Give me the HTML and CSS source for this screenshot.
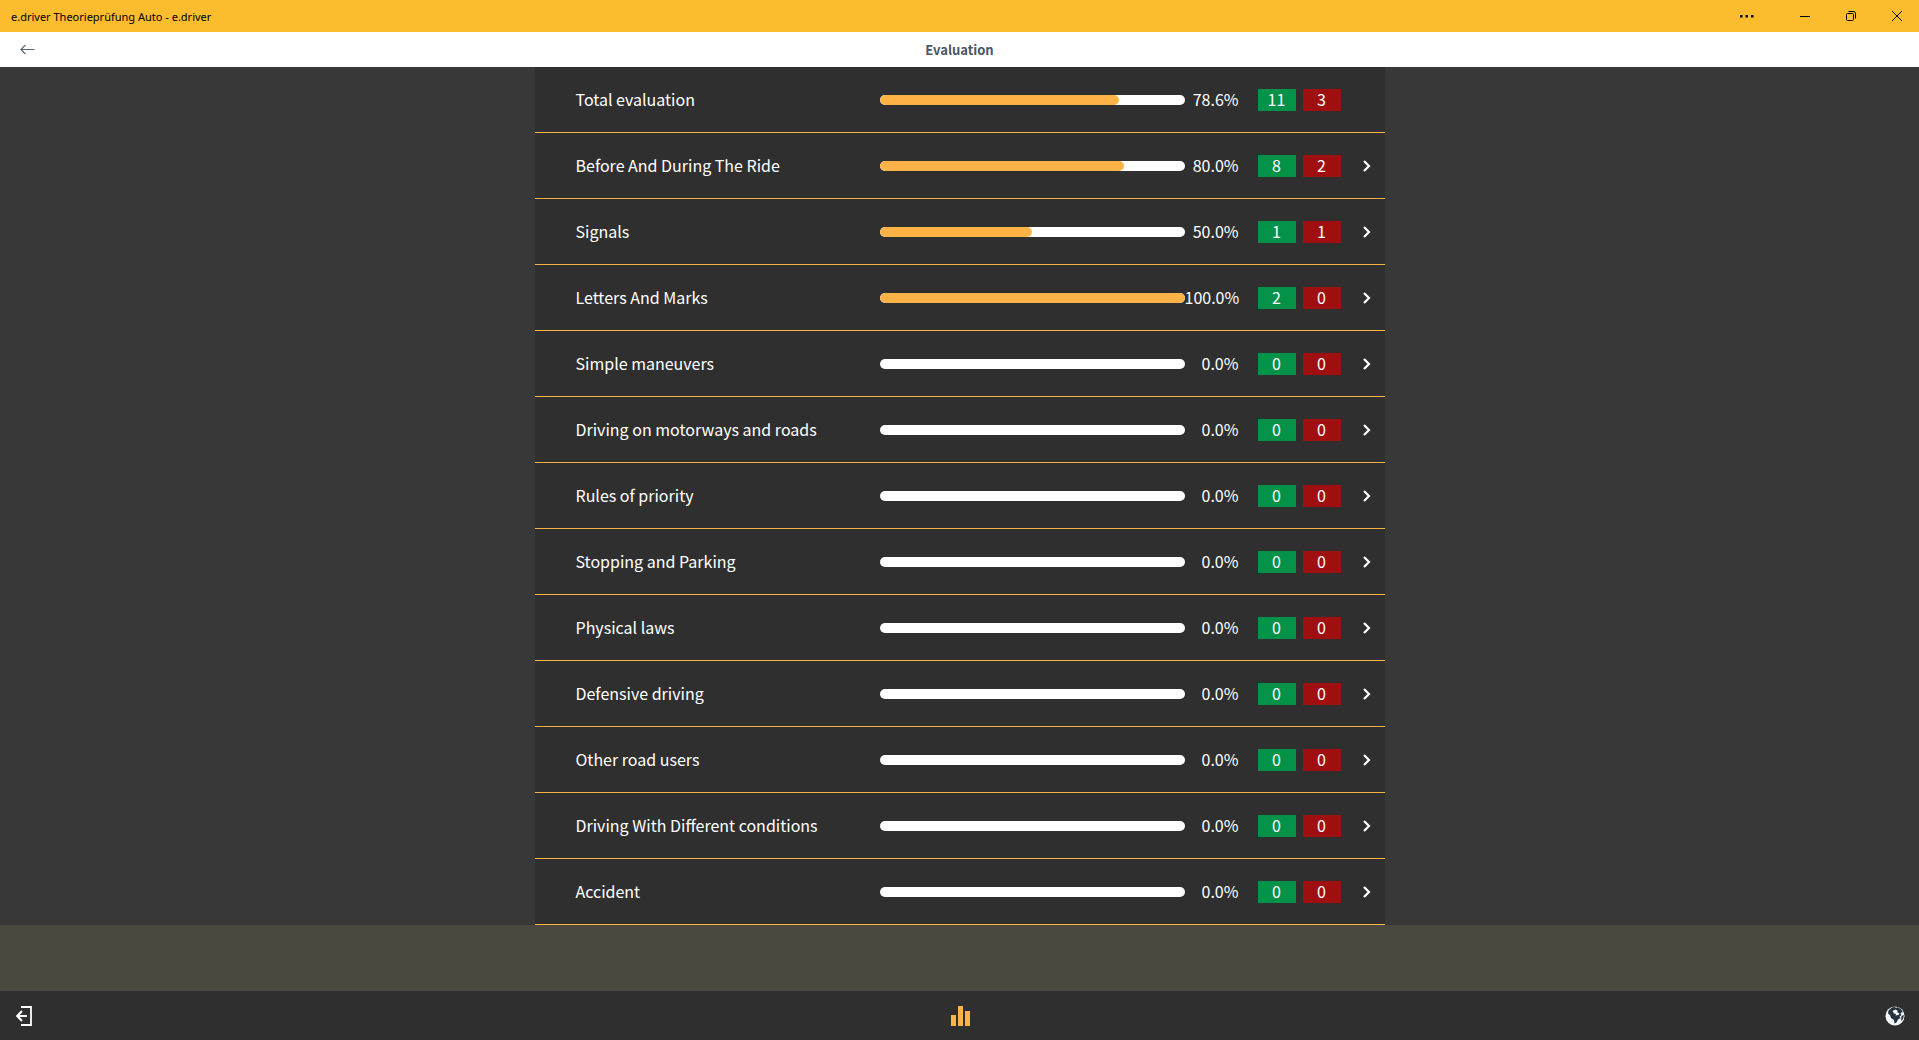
FILE: index.html
```
<!DOCTYPE html>
<html lang="en">
<head>
  <meta charset="UTF-8">
  <meta name="viewport" content="width=device-width, initial-scale=1.0">
  <title>e.driver Theorieprüfung Auto - e.driver</title>
  <link rel="stylesheet" href="styles.css">
</head>
<body>
  <div class="titlebar">
    <span class="app-name">e.driver Theorieprüfung Auto - e.driver</span>
    <div class="window-controls">
      <button class="more" aria-label="More">
        <svg width="14" height="10" viewBox="0 0 14 10"><path d="M0 4h2.500v2.500H0zM5.500 4H8v2.500H5.500zM11 4h2.500v2.500H11z"/></svg>
      </button>
      <button aria-label="Minimize">
        <svg width="10" height="10" viewBox="0 0 10 10"><path d="M0 5h10v1H0z"/></svg>
      </button>
      <button aria-label="Restore">
        <svg width="10" height="10" viewBox="0 0 10 10" fill="none" stroke="#000"><rect x=".5" y="2.500" width="7" height="7" rx="1"/><path d="M2.500 .5h5a2 2 0 0 1 2 2v5"/></svg>
      </button>
      <button aria-label="Close">
        <svg width="10" height="10" viewBox="0 0 10 10" fill="none" stroke="#000"><path d="M0 0l10 10M10 0L0 10"/></svg>
      </button>
    </div>
  </div>

  <header>
    <button class="back" aria-label="Back">
      <svg width="15" height="11" viewBox="0 0 15 11" fill="none" stroke="#5a6478" stroke-width="1.200"><path d="M14.500 5.500H1M5.500 .8L1 5.500l4.500 4.700"/></svg>
    </button>
    <h1>Evaluation</h1>
  </header>

  <main>
    <div class="results">
      <ul id="list"></ul>
    </div>
  </main>

  <footer>
    <button aria-label="Exit">
      <svg width="16" height="20" viewBox="0 0 16 20" fill="none" stroke="#fff" stroke-width="1.800"><path d="M5 1h10v18H5"/><path d="M11 10H1.500M6 5l-4.800 5L6 15" stroke-width="2.200"/></svg>
    </button>
    <button aria-label="Statistics">
      <svg width="19" height="20" viewBox="0 0 19 20" fill="#ffb347"><path d="M0 9h5v11H0zM7 0h5v20H7zM14 5h5v15h-5z"/></svg>
    </button>
    <button aria-label="Language">
      <svg width="20" height="20" viewBox="0 0 20 20">
        <circle cx="10" cy="10" r="9.500" fill="#f4f8fa"/>
        <path fill="#24323c" d="M3.500 4.500L7 1.500l4-1L10 2l3-.8 3.500 2.500 1.500 3-1-.7-1.500 1.500 1 1.500-2 1.500 1 1.500-2.500 1.500-1.500 3-2 1-.5-3.500L6 12l-1-3-2-1.500z"/>
        <path fill="#f4f8fa" d="M7.500 5l3-1.500L13 5l-1 1 2.500 1.500-1 1.500-3 .5.500-1.500L9 7.500z"/>
        <path fill="#24323c" d="M16.500 10l2.500-1-1 4-2 2z"/>
      </svg>
    </button>
  </footer>

  <script>
    // name, percent, right answers, wrong answers
    const results = [
      ['Total evaluation', 78.6, 11, 3],
      ['Before And During The Ride', 80, 8, 2],
      ['Signals', 50, 1, 1],
      ['Letters And Marks', 100, 2, 0],
      ['Simple maneuvers', 0, 0, 0],
      ['Driving on motorways and roads', 0, 0, 0],
      ['Rules of priority', 0, 0, 0],
      ['Stopping and Parking', 0, 0, 0],
      ['Physical laws', 0, 0, 0],
      ['Defensive driving', 0, 0, 0],
      ['Other road users', 0, 0, 0],
      ['Driving With Different conditions', 0, 0, 0],
      ['Accident', 0, 0, 0]
    ];

    const chevron = '<svg class="chevron" width="8" height="12" viewBox="0 0 8 12" fill="none" stroke="#fff" stroke-width="2.200"><path d="M1 1l5 5-5 5"/></svg>';

    // The total has no detail page, so only the topics are links
    document.getElementById('list').innerHTML = results.map(([name, percent, right, wrong], i) => {
      const tag = i === 0 ? 'div' : 'a';
      const href = i === 0 ? '' : ' href="#"';
      return `<li><${tag} class="row"${href}>
        <span class="name">${name}</span>
        <span class="bar"><span class="fill" style="width: ${percent}%"></span></span>
        <span class="percent">${percent.toFixed(1)}%</span>
        <span class="badge right">${right}</span>
        <span class="badge wrong">${wrong}</span>
        ${i === 0 ? '' : chevron}
      </${tag}></li>`;
    }).join('');
  </script>
</body>
</html>
```
FILE: styles.css
```
* {
  box-sizing: border-box;
}

body {
  display: flex;
  flex-direction: column;
  min-height: 100vh;
  margin: 0;
  font-family: "Noto Sans CJK SC", sans-serif;
  font-size: 16px;
  color: #fff;
  background-color: #4b4840;
}

button {
  display: flex;
  align-items: center;
  justify-content: center;
  padding: 0;
  border: none;
  background: none;
  cursor: pointer;
}

/* Window title bar */
.titlebar {
  display: flex;
  align-items: center;
  justify-content: space-between;
  height: 32px;
  padding-left: 11px;
  background-color: #fbbc2e;
  color: #000;
  font-family: "Noto Sans", sans-serif;
  font-size: 11px;
}

.window-controls {
  display: flex;
  gap: 2px;
}

.window-controls button {
  width: 44px;
  height: 32px;
}

.window-controls .more {
  margin-right: 12px;
}

/* Page header */
header {
  display: grid;
  grid-template-columns: 54px 1fr 54px;
  align-items: center;
  height: 35px;
  background-color: #fff;
}

header h1 {
  margin: 0;
  font-size: 13px;
  line-height: 20px;
  text-align: center;
  color: #4a5568;
}

/* Results */
main {
  flex: 1;
}

.results {
  background-color: #383838;
}

#list {
  max-width: 850px;
  margin: 0 auto;
  padding: 0;
  list-style: none;
  background-color: #2f2f2f;
}

.row {
  display: flex;
  align-items: center;
  height: 66px;
  padding: 0 44px 0 41px;
  border-bottom: 1px solid #ffb347;
  color: #fff;
  line-height: 20px;
  text-decoration: none;
}

a.row {
  padding-right: 14px;
}

.name,
.percent {
  padding-bottom: 2px;
}

.name {
  flex: 1;
}

.bar {
  width: 305px;
  height: 10px;
  border-radius: 5px;
  background-color: #fff;
  overflow: hidden;
}

.fill {
  display: block;
  height: 10px;
  border-radius: 5px;
  background-color: #ffb347;
}

.percent {
  width: 54px;
  margin-right: 19px;
  text-align: right;
}

.badge {
  width: 38px;
  height: 22px;
  text-align: center;
}

.right {
  margin-right: 7px;
  background-color: #049148;
}

.wrong {
  background-color: #9f0f0f;
}

.chevron {
  margin-left: 22px;
}

/* Bottom bar */
footer {
  display: grid;
  grid-template-columns: 1fr auto 1fr;
  align-items: center;
  height: 49px;
  padding: 0 14px 0 16px;
  background-color: #2f2f2f;
}

footer button:first-child {
  justify-self: start;
}

footer button:last-child {
  justify-self: end;
}
```
